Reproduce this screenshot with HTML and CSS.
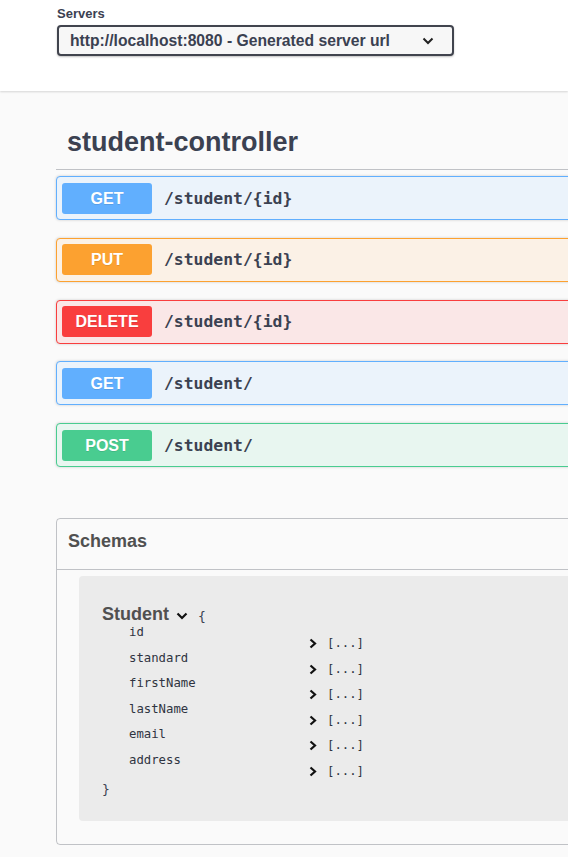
FILE: index.html
```html
<!DOCTYPE html>
<html lang="en">
<head>
    <meta charset="UTF-8">
    <meta name="viewport" content="width=device-width, initial-scale=1.0">
    <title>Swagger UI</title>
    <link rel="stylesheet" href="styles.css">
</head>
<body>
    <div class="topbar">
        <div class="servers-title">Servers</div>
        <div class="server-select">
            <span>http://localhost:8080 - Generated server url</span>
            <svg class="select-arrow" width="12" height="8" viewBox="0 0 12 8"><path d="M1.5 1.5 L6 6 L10.5 1.5" fill="none" stroke="#222" stroke-width="2"/></svg>
        </div>
    </div>

    <div class="wrapper">
        <h3 class="tag">student-controller</h3>

        <div class="opblocks">
            <div class="opblock get">
                <span class="method">GET</span>
                <span class="path">/student/{id}</span>
            </div>
            <div class="opblock put">
                <span class="method">PUT</span>
                <span class="path">/student/{id}</span>
            </div>
            <div class="opblock delete">
                <span class="method">DELETE</span>
                <span class="path">/student/{id}</span>
            </div>
            <div class="opblock get">
                <span class="method">GET</span>
                <span class="path">/student/</span>
            </div>
            <div class="opblock post">
                <span class="method">POST</span>
                <span class="path">/student/</span>
            </div>
        </div>

        <section class="models">
            <h4 class="models-title">Schemas</h4>
            <div class="model-box">
                <div class="model-title">
                    <span>Student</span>
                    <svg class="model-toggle" width="12" height="8" viewBox="0 0 12 8"><path d="M1.5 1.5 L6 6 L10.5 1.5" fill="none" stroke="#111" stroke-width="2.2"/></svg>
                    <span class="brace">{</span>
                </div>
                <div class="prop">
                    <span class="prop-name">id</span>
                    <span class="prop-type"><svg width="8" height="11" viewBox="0 0 8 11"><path d="M1.5 1.5 L6 5.5 L1.5 9.5" fill="none" stroke="#111" stroke-width="2.2"/></svg>[...]</span>
                </div>
                <div class="prop">
                    <span class="prop-name">standard</span>
                    <span class="prop-type"><svg width="8" height="11" viewBox="0 0 8 11"><path d="M1.5 1.5 L6 5.5 L1.5 9.5" fill="none" stroke="#111" stroke-width="2.2"/></svg>[...]</span>
                </div>
                <div class="prop">
                    <span class="prop-name">firstName</span>
                    <span class="prop-type"><svg width="8" height="11" viewBox="0 0 8 11"><path d="M1.5 1.5 L6 5.5 L1.5 9.5" fill="none" stroke="#111" stroke-width="2.2"/></svg>[...]</span>
                </div>
                <div class="prop">
                    <span class="prop-name">lastName</span>
                    <span class="prop-type"><svg width="8" height="11" viewBox="0 0 8 11"><path d="M1.5 1.5 L6 5.5 L1.5 9.5" fill="none" stroke="#111" stroke-width="2.2"/></svg>[...]</span>
                </div>
                <div class="prop">
                    <span class="prop-name">email</span>
                    <span class="prop-type"><svg width="8" height="11" viewBox="0 0 8 11"><path d="M1.5 1.5 L6 5.5 L1.5 9.5" fill="none" stroke="#111" stroke-width="2.2"/></svg>[...]</span>
                </div>
                <div class="prop">
                    <span class="prop-name">address</span>
                    <span class="prop-type"><svg width="8" height="11" viewBox="0 0 8 11"><path d="M1.5 1.5 L6 5.5 L1.5 9.5" fill="none" stroke="#111" stroke-width="2.2"/></svg>[...]</span>
                </div>
                <div class="brace close">}</div>
            </div>
        </section>
    </div>
</body>
</html>
```

FILE: styles.css
```css
body {
    margin: 0;
    background: #fafafa;
    font-family: "Liberation Sans", Arial, sans-serif;
    color: #3b4151;
    overflow: hidden;
}
.topbar {
    height: 91px;
    box-sizing: border-box;
    padding: 6px 0 0 57px;
    background: #fff;
    box-shadow: 0 1px 2px rgba(0, 0, 0, 0.15);
}
.servers-title {
    font-size: 13px;
    font-weight: bold;
    line-height: 16px;
    height: 19px;
}
.server-select {
    width: 397px;
    height: 31px;
    box-sizing: border-box;
    display: flex;
    align-items: center;
    justify-content: space-between;
    padding: 0 18px 0 11px;
    border: 2px solid #41444e;
    border-radius: 4px;
    background: #f7f7f7;
    font-size: 15.7px;
    font-weight: bold;
    box-shadow: 0 1px 2px rgba(0, 0, 0, 0.25);
}
.wrapper {
    width: 700px;
    padding-left: 56px;
}
.tag {
    margin: 23px 0 0;
    height: 56px;
    box-sizing: border-box;
    display: flex;
    align-items: center;
    padding: 1px 0 0 11px;
    border-bottom: 1px solid rgba(59, 65, 81, 0.3);
    font-size: 27px;
    font-weight: bold;
}
.opblocks {
    margin-top: 6px;
}
.opblock {
    height: 44px;
    box-sizing: border-box;
    display: flex;
    align-items: center;
    padding-left: 5px;
    margin-bottom: 17.75px;
    border: 1px solid;
    border-radius: 4px;
    box-shadow: 0 0 3px rgba(0, 0, 0, 0.19);
}
.method {
    width: 90px;
    height: 31px;
    line-height: 31px;
    text-align: center;
    border-radius: 3px;
    color: #fff;
    font-size: 16px;
    font-weight: bold;
    text-shadow: 0 1px 0 rgba(0, 0, 0, 0.1);
}
.path {
    margin-left: 12px;
    font-family: "DejaVu Sans Mono", monospace;
    font-size: 16.4px;
    font-weight: bold;
    color: #3b4151;
}
.get { background: #ebf3fb; border-color: #61affe; }
.get .method { background: #61affe; }
.put { background: #fbf1e6; border-color: #fca130; }
.put .method { background: #fca130; }
.delete { background: #fae7e7; border-color: #f93e3e; }
.delete .method { background: #f93e3e; }
.post { background: #e8f6f0; border-color: #49cc90; }
.post .method { background: #49cc90; }
.models {
    margin-top: 51px;
    border: 1px solid rgba(59, 65, 81, 0.3);
    border-radius: 4px;
    padding-bottom: 23px;
}
.models-title {
    margin: 0;
    height: 51px;
    box-sizing: border-box;
    display: flex;
    align-items: center;
    padding: 0 0 6px 11px;
    border-bottom: 1px solid rgba(59, 65, 81, 0.3);
    font-size: 18px;
    color: #505050;
}
.model-box {
    margin: 6px 0 0 22px;
    padding: 28px 23px 23.5px;
    background: #ebebeb;
    border-radius: 4px;
}
.model-title {
    display: flex;
    align-items: center;
    height: 21px;
    font-size: 18px;
    font-weight: bold;
    color: #505050;
}
.model-toggle {
    margin: 2px 0 0 7px;
}
.brace {
    font-family: "DejaVu Sans Mono", monospace;
    font-size: 13px;
    font-weight: normal;
    color: #3b4151;
}
.model-title .brace {
    margin: 4px 0 0 10px;
}
.brace.close {
    margin-top: 4px;
    line-height: 15px;
}
.prop {
    display: flex;
    height: 25.5px;
    font-family: "DejaVu Sans Mono", monospace;
    font-size: 12.3px;
    line-height: 15px;
    color: #2f3441;
}
.prop-name {
    width: 180px;
    padding-left: 27px;
}
.prop-type {
    display: flex;
    align-items: center;
    margin-top: 11px;
    height: 15px;
}
.prop-type svg {
    margin-right: 10px;
}
```
